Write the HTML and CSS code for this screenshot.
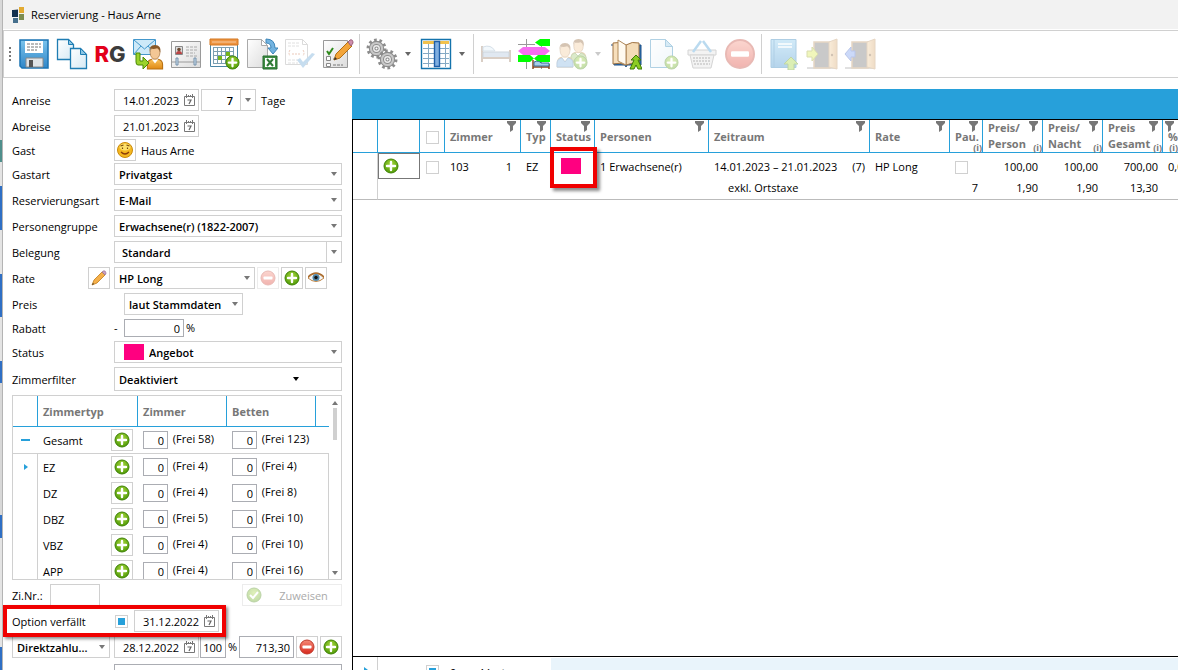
FILE: index.html
```html
<!DOCTYPE html>
<html lang="de">
<head>
  <meta charset="UTF-8">
  <title>Reservierung - Haus Arne</title>
  <link rel="stylesheet" href="styles.css">
</head>
<body>
  <!-- Symbole, die mehrfach vorkommen -->
  <svg class="sprites" aria-hidden="true">
    <defs>
      <radialGradient id="gruen" cx="50%" cy="35%" r="65%">
        <stop offset="0" stop-color="#a6d63a"/>
        <stop offset="1" stop-color="#4f9a06"/>
      </radialGradient>
      <linearGradient id="rot" x1="0" y1="0" x2="0" y2="1">
        <stop offset="0" stop-color="#f58a78"/>
        <stop offset="1" stop-color="#d8281c"/>
      </linearGradient>
      <linearGradient id="blau" x1="0" y1="0" x2="0" y2="1">
        <stop offset="0" stop-color="#7cc4ec"/>
        <stop offset="1" stop-color="#2f86c8"/>
      </linearGradient>
      <linearGradient id="papier" x1="0" y1="0" x2="1" y2="1">
        <stop offset="0" stop-color="#ffffff"/>
        <stop offset="1" stop-color="#d5e9f4"/>
      </linearGradient>
      <linearGradient id="papierGrau" x1="0" y1="0" x2="1" y2="1">
        <stop offset="0" stop-color="#ffffff"/>
        <stop offset="1" stop-color="#dcdcdc"/>
      </linearGradient>
      <linearGradient id="orange" x1="0" y1="0" x2="0" y2="1">
        <stop offset="0" stop-color="#f9c25c"/>
        <stop offset="1" stop-color="#e08a14"/>
      </linearGradient>
      <linearGradient id="tuer" x1="0" y1="0" x2="1" y2="0">
        <stop offset="0" stop-color="#f0cc96"/>
        <stop offset="1" stop-color="#d39d5c"/>
      </linearGradient>
    </defs>
    <symbol id="plus" viewBox="0 0 16 16">
      <circle cx="8" cy="8" r="7" fill="url(#gruen)" stroke="#3f8206"/>
      <path d="M8 4v8M4 8h8" stroke="#fff" stroke-width="2.4" stroke-linecap="round"/>
    </symbol>
    <symbol id="minus" viewBox="0 0 16 16">
      <circle cx="8" cy="8" r="7" fill="url(#rot)" stroke="#c03a2c"/>
      <rect x="3.5" y="6.6" width="9" height="2.8" rx=".6" fill="#fff"/>
    </symbol>
    <symbol id="kalender" viewBox="0 0 11 12">
      <path d="M.5 2.500h10v9H.5z" fill="#fff" stroke="#777"/>
      <path d="M2.500 0v4M8.500 0v4M4.500 1v2M6.500 1v2" stroke="#777"/>
      <path d="M3.500 6h3.500L5 10" fill="none" stroke="#666" stroke-width="1.200"/>
    </symbol>
    <symbol id="filter" viewBox="0 0 9 11">
      <path d="M0 0h9v2L6 5v4l-3 2V5L0 2z" fill="#777"/>
    </symbol>
    <symbol id="mensch" viewBox="0 0 16 24">
      <path d="M1 23v-4q0-4 4-5h6q4 1 4 5v4z" fill="url(#orange)" stroke="#b87012"/>
      <path d="M5 14l3 4 3-4z" fill="#fff"/>
      <ellipse cx="8" cy="8" rx="4.500" ry="6" fill="#f3c795" stroke="#a06c35" stroke-width=".6"/>
      <path d="M3 8q-1-7 5-7t5 7q-1-3-3-4-4 1-6 0-1 2-1 4z" fill="#8a5a28"/>
    </symbol>
    <symbol id="zahnrad" viewBox="0 0 20 20">
      <circle cx="10" cy="10" r="8" fill="none" stroke="#8c8c8c" stroke-width="3" stroke-dasharray="2.500 2.527"/>
      <circle cx="10" cy="10" r="6.800" fill="#c8c8c8" stroke="#8c8c8c"/>
      <circle cx="10" cy="10" r="3.800" fill="#ededed" stroke="#8c8c8c"/>
      <circle cx="10" cy="10" r="1.500" fill="#fff" stroke="#8c8c8c"/>
    </symbol>
    <symbol id="tuerrahmen" viewBox="0 0 32 32">
      <path d="M1 30h29" stroke="#555"/>
      <path d="M8 4h16v26H8z" fill="#666" stroke="#b98c58" stroke-width="1.500"/>
      <path d="M23 4l8-3v30l-8-2z" fill="url(#tuer)" stroke="#b98c58"/>
      <circle cx="26" cy="17" r="1.200" fill="#7b5428"/>
    </symbol>
  </svg>

  <div class="window">
    <header class="titlebar">
      <svg class="logo" viewBox="0 0 13 16">
        <path d="M0 3h6v7H0z" fill="#12304f"/>
        <path d="M1 11h5v5H1z" fill="#456f8d"/>
        <path d="M7 0h5v6H7z" fill="#e3ab32"/>
        <path d="M7 7h5v6H7z" fill="#7c8d51"/>
        <path d="M1 3l5-1v1z" fill="#8a8f8f"/>
      </svg>
      <span>Reservierung - Haus Arne</span>
    </header>

    <nav class="toolbar" aria-label="Werkzeugleiste">
      <span class="grip"></span>
      <button class="tool" title="Speichern"><svg viewBox="0 0 32 32">
        <path d="M2 2h28v28H4l-2-2z" fill="url(#blau)" stroke="#1b74b4" stroke-width="1.500"/>
        <path d="M7 3h18v12H7z" fill="#fff"/>
        <path d="M9 6h14M9 9h14M9 12h10" stroke="#777" stroke-dasharray="3 1"/>
        <path d="M8 20h17v9H8z" fill="#dfe3e6" stroke="#888"/>
        <path d="M11 22h4v7h-4z" fill="#555"/>
      </svg></button>
      <button class="tool" title="Kopieren"><svg viewBox="0 0 32 32">
        <path d="M1.500 1.500h11l5 5v15h-16z" fill="url(#papier)" stroke="#1f7db3" stroke-width="1.300"/>
        <path d="M12.500 1.500v5h5z" fill="#8cc6e4" stroke="#1f7db3"/>
        <path d="M14.500 10.500h10l6 6v14h-16z" fill="url(#papier)" stroke="#1f7db3" stroke-width="1.300"/>
        <path d="M24.500 10.500v6h6z" fill="#8cc6e4" stroke="#1f7db3"/>
      </svg></button>
      <button class="tool rg" title="Rechnung"><span class="rg-r">R</span><span class="rg-g">G</span></button>
      <button class="tool" title="E-Mail an Gast"><svg viewBox="0 0 32 32">
        <path d="M1.500 1.500h22v15h-22z" fill="#cde9f8" stroke="#4498cc"/>
        <path d="M2 2l10.500 9L23 2M2 16l7-8M23 16l-7-8" fill="none" stroke="#4498cc"/>
        <use href="#mensch" x="14" y="6" width="18" height="26"/>
        <path d="M4 15h4v8h3v-4l6 6-6 6v-4H6q-2 0-2-3z" fill="#9bd22c" stroke="#4a8a06"/>
      </svg></button>
      <button class="tool" title="Meldeschein"><svg viewBox="0 0 32 32">
        <path d="M1.500 3.500h29v26h-29z" fill="url(#papierGrau)" stroke="#9a9a9a"/>
        <path d="M1 24h30" stroke="#9a9a9a"/>
        <path d="M5.500 8.500h7v8h-7z" fill="#ddd" stroke="#888"/>
        <path d="M6 16q0-3 3-3t3 3z" fill="#b44"/>
        <circle cx="9" cy="11.500" r="1.800" fill="#6b4b33"/>
        <path d="M16 9h11M16 12h11M16 15h9M16 18h11" stroke="#aaa" stroke-dasharray="3 1"/>
        <path d="M6 20h2v7H6zM24 20h2v7h-2z" fill="#cfe0ee" stroke="#7591ab"/>
      </svg></button>
      <button class="tool" title="Termin hinzufügen"><svg viewBox="0 0 32 32">
        <path d="M2.500 1.500h27v27h-27z" fill="#fff" stroke="#4a86a6"/>
        <path d="M2 1h28v6H2z" fill="#ee9440" stroke="#d27620"/>
        <path d="M4 4h24" stroke="#fff" stroke-opacity=".5"/>
        <path d="M5.500 9v17M9.500 9v17M13.500 9v17M17.500 9v17M21.500 9v17M25.500 9v17M5 9.500h21M5 13.500h21M5 17.500h21M5 21.500h21M5 25.500h21" stroke="#7c9fb2"/>
        <path d="M18 14h4v4h-4zM10 18h4v4h-4z" fill="#76b41c"/>
        <use href="#plus" x="17" y="17" width="15" height="15"/>
      </svg></button>
      <button class="tool" title="Excel-Export"><svg viewBox="0 0 32 32">
        <path d="M1.500 1.500h14l6 6v22h-20z" fill="url(#papierGrau)" stroke="#aaa"/>
        <path d="M15.500 1.500v6h6z" fill="#fff" stroke="#aaa"/>
        <path d="M20 1q9 0 9 9h3l-5 6-5-6h3q0-5-5-5z" fill="#72b3e0" stroke="#3c85b8"/>
        <path d="M17 18h14v13H17z" fill="#3f8d45" stroke="#256b2c"/>
        <path d="M19 20h10v9H19z" fill="#fff"/>
        <path d="M21 21l6 7M27 21l-6 7" stroke="#2f7a36" stroke-width="2"/>
      </svg></button>
      <button class="tool" title="Dokument prüfen" disabled><svg viewBox="0 0 32 32">
        <path d="M1.500 1.500h17l5 5v20h-22z" fill="#fff" stroke="#999"/>
        <path d="M18.500 1.500v5h5" fill="none" stroke="#999"/>
        <path d="M4 5h11M4 8h11M4 22h10M4 25h10" stroke="#aaa" stroke-dasharray="3 1"/>
        <path d="M6 12q-2 3 0 6M19 12q2 3 0 6M8 16h9" stroke="#c96a3c" stroke-dasharray="2 1" fill="none"/>
        <path d="M13 22l3-2 3 4 9-9 3 1-12 14z" fill="#5f9fd4"/>
      </svg></button>
      <button class="tool" title="Bearbeiten"><svg viewBox="0 0 32 32">
        <path d="M1.500 2.500h24v27h-24z" fill="url(#papierGrau)" stroke="#999"/>
        <path d="M4.500 18.500h4v4h-4zM4.500 25.500h4v3h-4z" fill="#fff" stroke="#888"/>
        <path d="M5 13l2 3 4-6" fill="none" stroke="#2f8a1c" stroke-width="2"/>
        <path d="M11 21h4M11 27h10" stroke="#777" stroke-dasharray="3 1"/>
        <path d="M12 22l2-6L26 4l4 4-12 12z" fill="#f3a53a" stroke="#b36f14"/>
        <path d="M26 4l2-2q3-1 3 3l-2 3z" fill="#cf8fae" stroke="#9a5f7b"/>
        <path d="M12 22l1-3 2 2z" fill="#333"/>
      </svg></button>
      <span class="separator"></span>
      <button class="tool" title="Einstellungen"><svg viewBox="0 0 32 32">
        <use href="#zahnrad" x="0" y="0" width="21" height="21"/>
        <use href="#zahnrad" x="11" y="11" width="21" height="21"/>
      </svg></button>
      <button class="drop" title="Mehr Einstellungen"></button>
      <button class="tool" title="Spalten"><svg viewBox="0 0 32 32">
        <path d="M1.500 1.500h29v29h-29z" fill="#fff" stroke="#1473ac" stroke-width="1.400"/>
        <path d="M3 3h26v3H3z" fill="#f2c14c"/>
        <path d="M8.500 6v23M25.500 6v23M3 10.500h26M3 15.500h26M3 20.500h26M3 25.500h26" stroke="#86aac4"/>
        <path d="M14.500 3.500h5v25h-5z" fill="#7faee0" stroke="#1f5ea8" stroke-width="1.400"/>
      </svg></button>
      <button class="drop" title="Mehr Spalten"></button>
      <span class="separator"></span>
      <button class="tool" title="Zimmer" disabled><svg viewBox="0 0 32 32">
        <path d="M2 8v16M30 12v12" stroke="#93755c" stroke-width="2"/>
        <path d="M3 14h26v6H3z" fill="#a9c0d8" stroke="#74899e"/>
        <path d="M3 20h27" stroke="#93755c" stroke-width="2"/>
        <path d="M3 9q8-3 12 4H3z" fill="#dcecf8" stroke="#8aa7c0"/>
      </svg></button>
      <button class="tool" title="Zimmerwechsel"><svg viewBox="0 0 32 32">
        <path d="M8.500 1v30M23.500 1v30M0 6.500h17" stroke="#999"/>
        <path d="M17 4.500l5-3.500h10v7H22z" fill="#0f0"/>
        <path d="M0 13l5-4h22l5 4-5 4H5z" fill="#f76ef0"/>
        <path d="M0 17h12l4 3.500-4 3.500H0zM16 20.500l4-3.500h12v7H20z" fill="#0f0"/>
        <path d="M15 22v9M31 26v5M15 29h16" stroke="#8a4a22" stroke-width="1.500"/>
        <path d="M16 24q5-2 7 1h8v3H16z" fill="#a8cdea" stroke="#3c6e98"/>
      </svg></button>
      <button class="tool" title="Gäste" disabled><svg viewBox="0 0 32 32">
        <use href="#mensch" x="14" y="0" width="17" height="25"/>
        <path d="M15 23v-4q0-3 4-4l3 3 3-3q4 1 5 4v4z" fill="#9cc46a" stroke="#6c9840"/>
        <use href="#mensch" x="0" y="4" width="18" height="26"/>
        <path d="M1 29v-4q0-4 5-5l3 4 3-4q5 1 5 5v4z" fill="#78aede" stroke="#4a82b8"/>
        <use href="#plus" x="17" y="17" width="15" height="15"/>
      </svg></button>
      <button class="drop" title="Mehr Gäste" disabled></button>
      <button class="tool" title="Gästebuch"><svg viewBox="0 0 32 32">
        <path d="M1 7h3v20h11l1 2 1-2h14V7h-3" fill="#2d6fb0" stroke="#1c5187"/>
        <path d="M3 5q7-2 13 2v20q-6-3-13-1z" fill="#f7dfbc" stroke="#a07444"/>
        <path d="M29 5q-7-2-13 2v20q6-3 13-1z" fill="#f4dcb8" stroke="#a07444"/>
        <path d="M8 2l8 5v20l-8-4z" fill="#fffaf0" stroke="#b08a5c"/>
        <path d="M26 17l5 5h-3l4 9h-4l-2-4-2 4h-4l4-9h-3z" fill="#8ccc24" stroke="#3d7d08"/>
      </svg></button>
      <button class="tool" title="Neues Dokument" disabled><svg viewBox="0 0 32 32">
        <path d="M2.500 1.500h15l7 7v21h-22z" fill="url(#papier)" stroke="#1f7db3"/>
        <path d="M17.500 1.500v7h7z" fill="#8cc6e4" stroke="#1f7db3"/>
        <use href="#plus" x="16" y="17" width="15" height="15"/>
      </svg></button>
      <button class="tool" title="Warenkorb" disabled><svg viewBox="0 0 32 32">
        <path d="M2 12h28v5H2z" fill="#ddd" stroke="#888"/>
        <path d="M4 17h24l-3 13H7z" fill="#ddd" stroke="#888"/>
        <path d="M7 20h18M7 23h18M8 26h16" stroke="#888" stroke-width="2" stroke-dasharray="2 1"/>
        <path d="M7 14L15 3M25 14L17 3" stroke="#3c97d4" stroke-width="2.500"/>
      </svg></button>
      <button class="tool" title="Löschen" disabled><svg viewBox="0 0 32 32">
        <use href="#minus" width="32" height="32"/>
      </svg></button>
      <span class="separator"></span>
      <button class="tool" title="Ablage" disabled><svg viewBox="0 0 32 32">
        <path d="M3 1.500h25v28H3z" fill="url(#blau)" stroke="#1b74b4"/>
        <path d="M6 2v27" stroke="#1b74b4"/>
        <path d="M10 6h14M10 9h14" stroke="#fff" stroke-width="1.500"/>
        <path d="M23 19l7 7h-4v6h-6v-6h-4z" fill="#9bd22c" stroke="#4a8a06"/>
      </svg></button>
      <button class="tool" title="Check-in" disabled><svg viewBox="0 0 32 32">
        <use href="#tuerrahmen" width="32" height="32"/>
        <path d="M1 13h5v-4l6 7-6 7v-4H1z" fill="#d6e640" stroke="#94a01c"/>
      </svg></button>
      <button class="tool" title="Check-out" disabled><svg viewBox="0 0 32 32">
        <use href="#tuerrahmen" width="32" height="32"/>
        <path d="M11 13H7V9l-6 7 6 7v-4h4z" fill="#6d93f0" stroke="#3c5fc0"/>
      </svg></button>
    </nav>

    <main class="content">
      <form class="booking">
        <div class="row">
          <label for="anreise">Anreise</label>
          <span class="date"><input type="text" id="anreise" value="14.01.2023"><svg><use href="#kalender"/></svg></span>
          <span class="select split days"><select id="tage"><option>7</option></select></span>
          <label for="tage" class="unit">Tage</label>
        </div>
        <div class="row">
          <label for="abreise">Abreise</label>
          <span class="date"><input type="text" id="abreise" value="21.01.2023"><svg><use href="#kalender"/></svg></span>
        </div>
        <div class="row tight">
          <span class="caption">Gast</span>
          <button type="button" class="icon-button" title="Gast öffnen"><svg class="face" viewBox="0 0 16 16">
            <circle cx="8" cy="8" r="7.500" fill="#f5b820" stroke="#c98a0c"/>
            <ellipse cx="8" cy="5" rx="5.500" ry="3.500" fill="#fde06a"/>
            <path d="M3.500 4l3-1M9.500 3l3 1M5.500 5.500v1.500M10.500 5.500v1.500" stroke="#7a4a08" stroke-width="1.200"/>
            <path d="M4 10q4 4 8 0" fill="none" stroke="#8a3c08" stroke-width="1.200"/>
          </svg></button>
          <span class="guest">Haus Arne</span>
        </div>
        <div class="row">
          <label for="gastart">Gastart</label>
          <span class="select fill"><select id="gastart"><option>Privatgast</option></select></span>
        </div>
        <div class="row">
          <label for="resart">Reservierungsart</label>
          <span class="select fill"><select id="resart"><option>E-Mail</option></select></span>
        </div>
        <div class="row">
          <label for="gruppe">Personengruppe</label>
          <span class="select fill"><select id="gruppe"><option>Erwachsene(r) (1822-2007)</option></select></span>
        </div>
        <div class="row">
          <label for="belegung">Belegung</label>
          <span class="select split fill"><select id="belegung"><option>Standard</option></select></span>
        </div>
        <div class="row rate">
          <label for="rate">Rate</label>
          <button type="button" class="icon-button" title="Rate bearbeiten"><svg viewBox="0 0 16 16">
            <path d="M1 15l2-5 8-8 3 3-8 8z" fill="#f5b04a" stroke="#c07c1c" stroke-width=".8"/>
            <path d="M11 2l1-1q3-1 3 3l-1 1z" fill="#c9a0c4" stroke="#8e6a8c" stroke-width=".6"/>
            <path d="M1 15l1-2 1 1z" fill="#333"/>
          </svg></button>
          <span class="select fill"><select id="rate"><option>HP Long</option></select></span>
          <button type="button" class="icon-button" title="Rate entfernen" disabled><svg><use href="#minus"/></svg></button>
          <button type="button" class="icon-button" title="Rate hinzufügen"><svg><use href="#plus"/></svg></button>
          <button type="button" class="icon-button last" title="Rate anzeigen"><svg viewBox="0 0 16 16">
            <path d="M0 8q8-9 16 0-8 7-16 0z" fill="#f2f6f8" stroke="#c08444"/>
            <circle cx="8" cy="7.500" r="3.500" fill="#4f86a8"/>
            <circle cx="8" cy="7.500" r="1.700" fill="#111"/>
            <path d="M0 7q8-8 16 0" fill="none" stroke="#a86a2c" stroke-width="1.400"/>
          </svg></button>
        </div>
        <div class="row">
          <label for="preis">Preis</label>
          <span class="select price"><select id="preis"><option>laut Stammdaten</option></select></span>
        </div>
        <div class="row small">
          <label for="rabatt">Rabatt</label>
          <span class="sign">-</span>
          <input type="text" class="number discount" id="rabatt" value="0">
          <span class="percent">%</span>
        </div>
        <div class="row">
          <label for="status">Status</label>
          <span class="select status fill"><i class="swatch"></i><select id="status"><option>Angebot</option></select></span>
        </div>
        <div class="row filter-row">
          <label for="zimmerfilter">Zimmerfilter</label>
          <span class="select dark fill"><select id="zimmerfilter"><option>Deaktiviert</option></select></span>
        </div>

        <div class="rooms">
          <table class="rooms-table">
            <colgroup><col class="r-mark"><col class="r-name"><col class="r-add"><col class="r-count"><col class="r-count"><col></colgroup>
            <thead>
              <tr><th></th><th colspan="2">Zimmertyp</th><th>Zimmer</th><th>Betten</th><th></th></tr>
            </thead>
            <tbody class="total">
              <tr>
                <td><i class="collapse"></i></td><td>Gesamt</td>
                <td><button type="button" class="icon-button" title="Zimmer hinzufügen"><svg><use href="#plus"/></svg></button></td>
                <td><input type="text" class="number" value="0" aria-label="Zimmer gesamt"> (Frei 58)</td>
                <td><input type="text" class="number" value="0" aria-label="Betten gesamt"> (Frei 123)</td><td></td>
              </tr>
            </tbody>
            <tbody class="types">
              <tr>
                <td><i class="expand"></i></td><td>EZ</td>
                <td><button type="button" class="icon-button" title="EZ hinzufügen"><svg><use href="#plus"/></svg></button></td>
                <td><input type="text" class="number" value="0" aria-label="Zimmer EZ"> (Frei 4)</td>
                <td><input type="text" class="number" value="0" aria-label="Betten EZ"> (Frei 4)</td><td></td>
              </tr>
              <tr>
                <td></td><td>DZ</td>
                <td><button type="button" class="icon-button" title="DZ hinzufügen"><svg><use href="#plus"/></svg></button></td>
                <td><input type="text" class="number" value="0" aria-label="Zimmer DZ"> (Frei 4)</td>
                <td><input type="text" class="number" value="0" aria-label="Betten DZ"> (Frei 8)</td><td></td>
              </tr>
              <tr>
                <td></td><td>DBZ</td>
                <td><button type="button" class="icon-button" title="DBZ hinzufügen"><svg><use href="#plus"/></svg></button></td>
                <td><input type="text" class="number" value="0" aria-label="Zimmer DBZ"> (Frei 5)</td>
                <td><input type="text" class="number" value="0" aria-label="Betten DBZ"> (Frei 10)</td><td></td>
              </tr>
              <tr>
                <td></td><td>VBZ</td>
                <td><button type="button" class="icon-button" title="VBZ hinzufügen"><svg><use href="#plus"/></svg></button></td>
                <td><input type="text" class="number" value="0" aria-label="Zimmer VBZ"> (Frei 4)</td>
                <td><input type="text" class="number" value="0" aria-label="Betten VBZ"> (Frei 10)</td><td></td>
              </tr>
              <tr>
                <td></td><td>APP</td>
                <td><button type="button" class="icon-button" title="APP hinzufügen"><svg><use href="#plus"/></svg></button></td>
                <td><input type="text" class="number" value="0" aria-label="Zimmer APP"> (Frei 4)</td>
                <td><input type="text" class="number" value="0" aria-label="Betten APP"> (Frei 16)</td><td></td>
              </tr>
            </tbody>
          </table>
          <div class="scrollbar"><i class="up"></i><i class="thumb"></i><i class="down"></i></div>
        </div>

        <div class="row assign">
          <label for="zinr">Zi.Nr.:</label>
          <input type="text" class="room-number" id="zinr">
          <button type="button" class="assign-button" disabled><svg viewBox="0 0 16 16">
            <circle cx="8" cy="8" r="7" fill="url(#gruen)" stroke="#3f8206"/>
            <path d="M4 8l3 3 5-6" fill="none" stroke="#fff" stroke-width="2"/>
          </svg><span>Zuweisen</span></button>
        </div>
        <div class="row option">
          <label for="option">Option verfällt</label>
          <input type="checkbox" class="check filled" id="option" checked>
          <span class="date"><input type="text" value="31.12.2022" aria-label="Option verfällt am"><svg><use href="#kalender"/></svg></span>
        </div>
        <div class="row payment">
          <span class="select pay"><select aria-label="Zahlungsart"><option>Direktzahlu...</option></select></span>
          <span class="date"><input type="text" value="28.12.2022" aria-label="Zahlungsdatum"><svg><use href="#kalender"/></svg></span>
          <input type="text" class="number share" value="100" aria-label="Anteil">
          <span class="percent">%</span>
          <input type="text" class="number amount" value="713,30" aria-label="Betrag">
          <button type="button" class="icon-button" title="Zahlung entfernen"><svg><use href="#minus"/></svg></button>
          <button type="button" class="icon-button" title="Zahlung hinzufügen"><svg><use href="#plus"/></svg></button>
        </div>
        <div class="row proforma">
          <label for="beleg">Beleg-/Pers.-Nr.:</label>
          <input type="text" class="fill" id="beleg">
        </div>
      </form>

      <section class="list">
        <div class="banner"></div>
        <div class="list-body">
          <table class="list-table">
            <colgroup>
              <col class="c-mark"><col class="c-add"><col class="c-check"><col class="c-room"><col class="c-type"><col class="c-status"><col class="c-persons">
              <col class="c-period"><col class="c-rate"><col class="c-flat"><col class="c-price"><col class="c-price"><col class="c-price"><col>
            </colgroup>
            <thead>
              <tr>
                <th></th>
                <th></th>
                <th class="center"><input type="checkbox" class="check" aria-label="Alle auswählen"></th>
                <th>Zimmer<svg class="filter"><use href="#filter"/></svg></th>
                <th>Typ<svg class="filter"><use href="#filter"/></svg></th>
                <th>Status<svg class="filter"><use href="#filter"/></svg></th>
                <th>Personen<svg class="filter"><use href="#filter"/></svg></th>
                <th>Zeitraum<svg class="filter"><use href="#filter"/></svg></th>
                <th>Rate<svg class="filter"><use href="#filter"/></svg></th>
                <th>Pau.<svg class="filter"><use href="#filter"/></svg><small>(i)</small></th>
                <th class="double">Preis/<br>Person<svg class="filter"><use href="#filter"/></svg><small>(i)</small></th>
                <th class="double">Preis/<br>Nacht<svg class="filter"><use href="#filter"/></svg><small>(i)</small></th>
                <th class="double">Preis<br>Gesamt<svg class="filter"><use href="#filter"/></svg><small>(i)</small></th>
                <th>%<svg class="filter"><use href="#filter"/></svg><small>(i)</small></th>
              </tr>
            </thead>
            <tbody>
              <tr>
                <td rowspan="2"></td>
                <td class="add-cell"><button class="add" title="Zeile hinzufügen"><svg><use href="#plus"/></svg></button></td>
                <td class="center"><input type="checkbox" class="check" aria-label="Zimmer 103 auswählen"></td>
                <td><span class="pair room"><span>103</span><span>1</span></span></td>
                <td>EZ</td>
                <td class="marked"><i class="swatch"></i></td>
                <td>1 Erwachsene(r)</td>
                <td><span class="pair"><span>14.01.2023 – 21.01.2023</span><span>(7)</span></span></td>
                <td>HP Long</td>
                <td><input type="checkbox" class="check" aria-label="Pauschale"></td>
                <td class="amount-cell">100,00</td>
                <td class="amount-cell">100,00</td>
                <td class="amount-cell">700,00</td>
                <td class="clip">0,00</td>
              </tr>
              <tr class="tax">
                <td colspan="6"></td>
                <td class="indent">exkl. Ortstaxe</td>
                <td></td>
                <td class="amount-cell">7</td>
                <td class="amount-cell">1,90</td>
                <td class="amount-cell">1,90</td>
                <td class="amount-cell">13,30</td>
                <td></td>
              </tr>
            </tbody>
          </table>
        </div>
        <footer class="summary">
          <i class="expand"></i>
          <span class="summary-text"><input type="checkbox" class="check filled" id="markiert" checked><label for="markiert">0 markiert</label></span>
          <span class="summary-rest"></span>
        </footer>
      </section>
    </main>
  </div>
</body>
</html>
```
FILE: styles.css
```css
*, *::before, *::after { box-sizing: border-box; }
body {
  margin: 0;
  height: 100vh;
  padding-left: 2px;
  overflow: hidden;
  font: 11px/16px "Open Sans", "Noto Sans", sans-serif;
  color: #000;
  background: linear-gradient(#d8d8d8 0 140px, #4f8f8c 140px 162px, #e4e4e4 162px 186px, #2f6fc4 186px 230px, #e4e4e4 230px 274px, #2f6fc4 274px 317px, #e4e4e4 317px 361px, #2f6fc4 361px 383px, #d8d8d8 383px 515px, #2f6fc4 515px 538px, #e4e4e4 538px 647px, #2f6fc4 647px);
}
button, input, select { font: inherit; color: inherit; margin: 0; }
button { padding: 0; border: 0; background: none; }
button:disabled svg, .drop:disabled { opacity: .35; }
svg { display: block; flex: none; }
.sprites { position: absolute; width: 0; height: 0; }

.window { display: flex; flex-direction: column; height: 100%; background: #fff; border-left: 1px solid #b4b4b4; }
.titlebar { display: flex; align-items: center; flex: none; gap: 6px; height: 29px; padding-left: 9px; background: #f2f2f2; }
.logo { width: 13px; height: 16px; }

/* Werkzeugleiste */
.toolbar { display: flex; align-items: center; flex: none; height: 48px; margin-top: 1px; padding-left: 5px; border: 1px solid #d0d0d0; border-right: 0; }
.grip { width: 2px; height: 14px; margin-right: 4px; background: repeating-linear-gradient(#777 0 2px, transparent 2px 4px); }
.tool { display: flex; justify-content: center; width: 38px; flex: none; }
.tool svg { width: 32px; height: 32px; }
.rg { font: 800 22px/32px Inter, sans-serif; }
.rg-r { color: #e3001b; }
.rg-g { color: #3c3c3c; }
.drop { width: 16px; height: 32px; flex: none; padding-left: 4px; }
.drop::before { content: ""; display: block; border: 3px solid transparent; border-top: 4px solid #666; border-bottom: 0; width: 0; }
.separator { width: 1px; height: 40px; margin: 0 3px 0 2px; background: #d0d0d0; }

.content { display: flex; flex: 1; min-height: 0; padding-top: 11px; }

/* Formular links */
.booking { display: flex; flex-direction: column; gap: 4px; width: 349px; flex: none; padding: 0 10px 0 9px; overflow: hidden; }
.row { display: flex; align-items: center; flex: none; height: 22px; }
.row > label:first-child, .caption { width: 102px; flex: none; padding-top: 2px; white-space: nowrap; }
.tight { margin: -2px 0; }
.small { height: 18px; }
.filter-row { height: 24px; }
.fill { flex: 1; min-width: 0; }
.unit, .guest { margin-left: 5px; padding-top: 2px; }
.date { display: flex; align-items: center; width: 85px; height: 22px; padding-right: 3px; border: 1px solid #d0d0d0; }
.date input { flex: 1; width: 0; padding: 1px 5px 0 0; border: 0; background: none; text-align: right; }
.date svg { width: 11px; height: 12px; }
.select { display: grid; height: 22px; align-items: center; border: 1px solid #d0d0d0; }
.select select { grid-area: 1 / 1; width: 100%; height: 100%; padding: 1px 14px 0 4px; border: 0; appearance: none; background: none; font-weight: 600; }
.select::after { content: ""; grid-area: 1 / 1; justify-self: end; margin-right: 4px; border: 3px solid transparent; border-top: 4px solid #777; border-bottom: 0; pointer-events: none; }
.split select { background: linear-gradient(#d0d0d0, #d0d0d0) right 14px top / 1px 100% no-repeat; padding-left: 7px; }
.days { width: 55px; margin-left: 2px; }
.days select { padding-right: 22px; text-align: right; text-align-last: right; }
.rate > label:first-child { width: 76px; }
.rate .icon-button { margin-left: 2px; }
.rate label + .icon-button { margin: 0 4px 0 0; }
.rate .last { margin-right: 15px; }
.price { width: 119px; margin-left: 10px; }
.sign { width: 10px; }
.swatch { display: block; width: 20px; height: 16px; background: #ff0080; }
.status .swatch { grid-area: 1 / 1; margin-left: 9px; }
.status select { padding-left: 34px; }
.filter-row .select { height: 24px; }
.select.dark::after { border-top-color: #000; margin-right: 42px; }
.icon-button { display: flex; align-items: center; justify-content: center; width: 22px; height: 22px; flex: none; border: 1px solid #d0d0d0; background: #fff; }
.icon-button:disabled { border-color: #ececec; }
.icon-button svg { width: 16px; height: 16px; }
.number { padding: 1px 3px 0 2px; border: 1px solid #abadb3; background: #fff; text-align: right; }
.discount { width: 60px; height: 18px; }
.percent { margin-left: 2px; }

/* Zimmertypen */
.rooms { display: flex; height: 185px; flex: none; border: 1px solid #d0d0d0; overflow: hidden; }
.rooms-table { flex: 1; align-self: flex-start; width: 316px; table-layout: fixed; border-collapse: separate; border-spacing: 0; }
.r-mark { width: 25px; }
.r-name { width: 72px; }
.r-add { width: 28px; }
.r-count { width: 89px; }
.rooms-table th { height: 31px; padding: 2px 5px 0; border-right: 1px solid #27a0da; border-bottom: 1px solid #27a0da; color: #777; text-align: left; font-weight: 700; }
.rooms-table th:last-child { border-right: 0; }
.rooms-table td { height: 26px; padding: 0 0 0 5px; white-space: nowrap; }
.rooms-table td:nth-child(2) { padding-top: 1px; }
.rooms-table td:nth-child(3) { padding-left: 1px; }
.rooms-table td:first-child { padding-left: 8px; }
.rooms-table td .number { width: 25px; height: 18px; margin-right: 2px; vertical-align: middle; }
.types tr:first-child td { border-top: 1px solid #d0d0d0; height: 27px; }
.types td:first-child { border-right: 1px solid #d0d0d0; }
.types td:last-child { border-right: 1px solid #d0d0d0; }
.collapse { display: block; width: 9px; height: 2px; background: #27a0da; }
.expand { display: block; width: 0; border: 3px solid transparent; border-left: 4px solid #27a0da; border-right: 0; }
.types .expand { margin-left: 3px; }
.scrollbar { display: flex; flex-direction: column; align-items: center; width: 12px; padding: 5px 0 4px; }
.up { border: 3px solid transparent; border-bottom: 4px solid #777; border-top: 0; }
.thumb { width: 4px; height: 32px; margin: 3px 0 auto; background: #d0d0d0; }
.down { border: 3px solid transparent; border-top: 4px solid #777; border-bottom: 0; }

.assign > label:first-child { width: 38px; }
.room-number { width: 50px; height: 22px; border: 1px solid #d0d0d0; }
.assign-button { display: flex; align-items: center; width: 100px; height: 22px; margin-left: auto; padding-left: 3px; border: 1px solid #ececec; color: #aaa; }
.assign-button svg { width: 16px; height: 16px; }
.assign-button span { flex: 1; padding: 1px 0 0 4px; text-align: center; }
.option { position: relative; }
.option .check { margin: 0 6px 0 1px; }
.option::after { content: ""; position: absolute; left: -9px; top: -5px; width: 223px; height: 32px; border: 4px solid #f00000; box-shadow: 2px 2px 3px rgba(0, 0, 0, .45); pointer-events: none; }
.pay { width: 98px; margin-right: 4px; }
.share { width: 26px; height: 22px; margin-left: 1px; }
.amount { width: 55px; height: 22px; margin-left: auto; margin-right: 2px; }
.payment .icon-button + .icon-button { margin-left: 2px; }
.proforma { margin-top: 2px; }
.proforma input { height: 22px; border: 1px solid #abadb3; }
.check { display: grid; place-content: center; appearance: none; width: 13px; height: 13px; flex: none; border: 1px solid #d0d0d0; background: #fff; }
.filled::before { content: ""; width: 7px; height: 7px; background: #27a0da; }

/* Zimmerliste rechts */
.list { display: flex; flex-direction: column; flex: 1; min-width: 0; }
.banner { flex: none; height: 30px; background: #27a0da; }
.list-body { flex: 1; min-height: 0; border: 1px solid #000; border-right: 0; overflow: hidden; }
.list-table { width: 100%; table-layout: fixed; border-collapse: separate; border-spacing: 0; }
.c-mark { width: 25px; }
.c-add { width: 42px; }
.c-check { width: 25px; }
.c-room { width: 76px; }
.c-type { width: 30px; }
.c-status { width: 44px; }
.c-persons { width: 114px; }
.c-period { width: 161px; }
.c-rate { width: 80px; }
.c-flat { width: 33px; }
.c-price { width: 60px; }
.list-table th { position: relative; height: 33px; padding: 2px 0 0 5px; border-right: 1px solid #27a0da; border-bottom: 1px solid #27a0da; color: #777; text-align: left; font-weight: 700; white-space: nowrap; }
.list-table th:last-child { border-right: 0; }
.list-table .double { padding-top: 0; }
.list-table .center { padding-left: 6px; }
.filter { position: absolute; top: 1px; right: 4px; width: 9px; height: 11px; }
.list-table small { position: absolute; right: 0; bottom: 0; font-size: 9px; line-height: 9px; }
.list-table td { height: 26px; padding: 2px 5px 0 5px; white-space: nowrap; }
.list-table td:first-child[rowspan] { border-right: 1px solid #d0d0d0; }
.list-table .add-cell { padding: 0; }
.add { display: flex; align-items: center; width: 42px; height: 26px; padding-left: 4px; border: 1px solid #777; }
.add svg { width: 16px; height: 16px; }
.pair { display: flex; justify-content: space-between; }
.room { padding-right: 4px; }
.list-table .marked { position: relative; padding: 0 0 0 10px; }
.marked::after { content: ""; position: absolute; left: -1px; top: -6px; width: 47px; height: 41px; border: 4px solid #f00000; box-shadow: 3px 3px 3px rgba(0, 0, 0, .45); pointer-events: none; }
.list-table .amount-cell { text-align: right; }
.list-table .clip { padding-right: 0; overflow: hidden; }
.list-table .tax td, .list-table td[rowspan] { border-bottom: 1px solid #bbb; }
.list-table .tax td { height: 21px; padding-top: 0; padding-bottom: 2px; }
.list-table .indent { padding-left: 19px; }
.summary { display: flex; height: 13px; flex: none; border-left: 1px solid #000; overflow: hidden; }
.summary .expand { height: 6px; margin: 10px 9px 0 11px; }
.summary-text { display: flex; align-items: flex-start; width: 174px; padding: 8px 0 0 48px; border-left: 1px solid #d0d0d0; font-weight: 600; }
.summary-text label { margin-left: 11px; white-space: nowrap; }
.summary-rest { flex: 1; margin-top: 1px; background: #e9f4fb; }
```
